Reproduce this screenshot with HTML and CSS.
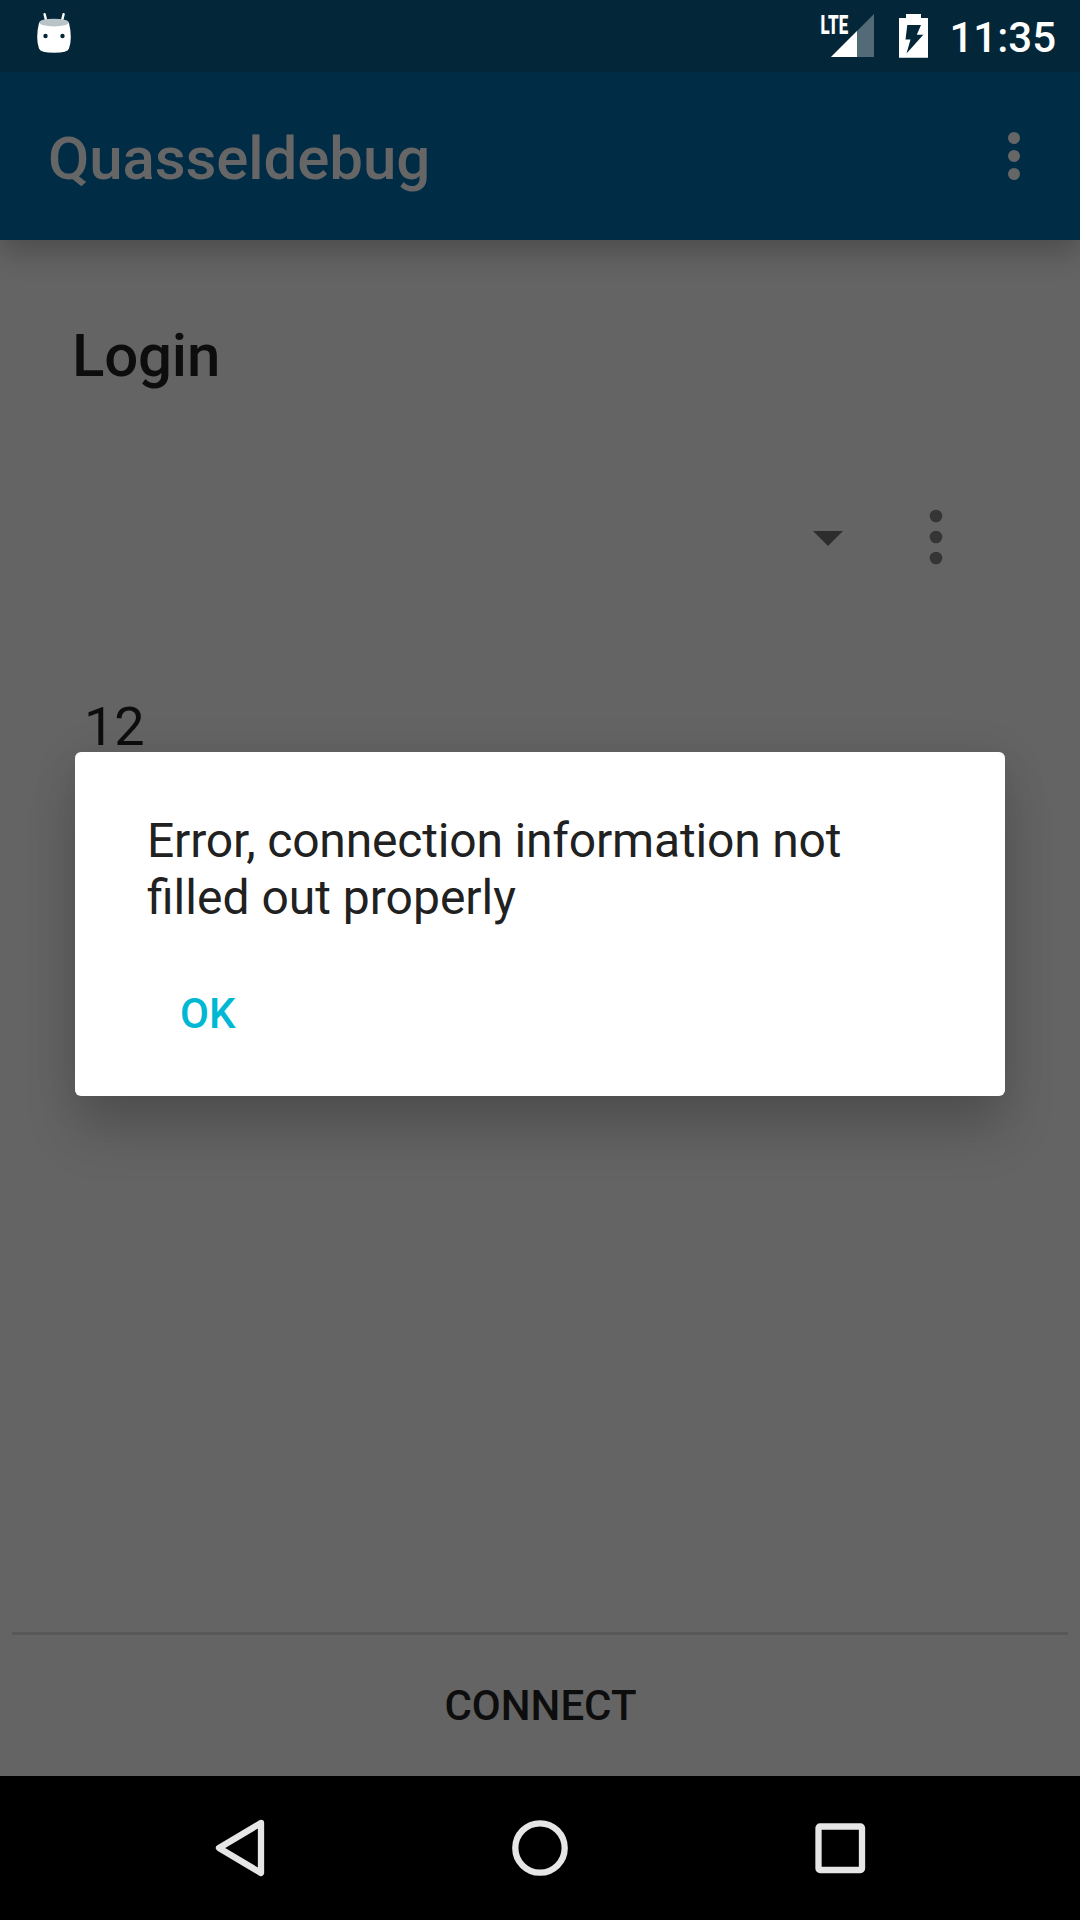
FILE: index.html
```html
<!DOCTYPE html>
<html lang="en">
<head>
<meta charset="utf-8">
<title>Quasseldebug</title>
<link rel="stylesheet" href="styles.css">
</head>
<body>
<div class="screen">
  <header class="status-bar">
    <svg class="status-head" width="36" height="42" viewBox="0 0 36 42">
      <path class="antenna" d="M8.6 2.2l1.8 7.4M27.6 2.2l-1.8 7.4"/>
      <path class="fill-white" d="M3 11Q1.2 18 1.2 25Q1.2 32 3 36.5Q4.300 40.800 18 40.800Q31.700 40.800 33 36.500Q34.800 32 34.800 25Q34.800 18 33 11Q30 8 18 8Q6 8 3 11z"/>
      <ellipse class="head-top" cx="18" cy="10.600" rx="14.800" ry="3.900"/>
      <circle class="fill-bar" cx="9.500" cy="24" r="2.200"/>
      <circle class="fill-bar" cx="26.500" cy="24" r="2.200"/>
    </svg>
    <div class="status-right">
      <svg class="signal" width="54" height="50" viewBox="0 -6 54 50">
        <path class="signal-off" d="M54 0V43H11z"/>
        <path class="fill-white" d="M37 17V43H11z"/>
        <text class="lte" x="0.600" y="19.700" textLength="27.500" lengthAdjust="spacingAndGlyphs">LTE</text>
      </svg>
      <svg class="battery" width="29" height="44" viewBox="0 0 29 44">
        <path class="fill-white" d="M7 0H22V4H29V43.700H0V4H7z"/>
        <path class="fill-bar" d="M8.300 11H22L17.800 20.800H24.300L7.500 39.500L11.500 25.500H6.500z"/>
      </svg>
      <span class="clock">11:35</span>
    </div>
  </header>
  <div class="app-bar">
    <h1 class="app-title">Quasseldebug</h1>
    <svg class="more-light" width="12" height="48" viewBox="0 0 12 48">
      <circle cx="6" cy="6" r="6"/><circle cx="6" cy="24" r="6"/><circle cx="6" cy="42" r="6"/>
    </svg>
  </div>
  <main class="content">
    <h2 class="login-title">Login</h2>
    <div class="account-row">
      <svg class="arrow" width="30" height="15" viewBox="0 0 30 15"><path d="M0 0H30L15 15z"/></svg>
      <svg class="more-dark" width="14" height="56" viewBox="0 0 14 56">
        <circle cx="7" cy="7" r="6.300"/><circle cx="7" cy="28" r="6.300"/><circle cx="7" cy="49" r="6.300"/>
      </svg>
    </div>
    <div class="field">12</div>
    <div class="connect">CONNECT</div>
  </main>
  <nav class="nav-bar">
    <div class="nav-item"><svg width="60" height="60" viewBox="0 0 60 60"><path d="M51 5L9 30L51 55z"/></svg></div>
    <div class="nav-item"><svg width="60" height="60" viewBox="0 0 60 60"><circle cx="30" cy="30" r="24.700"/></svg></div>
    <div class="nav-item"><svg width="60" height="60" viewBox="0 0 60 60"><rect x="8.500" y="8.500" width="43.500" height="43.500" rx="1.500"/></svg></div>
  </nav>
  <div class="dialog">
    <p class="message"><span class="tight">Error, connection information not</span> filled out properly</p>
    <div class="ok">OK</div>
  </div>
</div>
</body>
</html>
```
FILE: styles.css
```css
* { box-sizing: border-box; margin: 0; padding: 0; }
body { font-family: Roboto, sans-serif; background: #000; }
svg { display: block; flex: none; }
.screen {
  position: relative;
  display: flex;
  flex-direction: column;
  width: 1080px;
  height: 1920px;
  overflow: hidden;
  background: #646464;
}
.status-bar {
  position: relative;
  z-index: 1;
  display: flex;
  justify-content: space-between;
  height: 72px;
  padding: 12px 24px 0 36px;
  background: #032738;
}
.status-right { display: flex; align-items: flex-start; padding-top: 2px; }
.signal { margin: -6px 25px 0 0; }
.battery { margin-right: 21px; }
.clock { font-size: 42px; font-weight: 500; line-height: 48px; color: #fff; }
.fill-white { fill: #fff; }
.fill-bar { fill: #032738; }
.head-top { fill: #b9c4c9; }
.antenna { stroke: #fff; stroke-width: 2.4; stroke-linecap: round; }
.signal-off { fill: #536a77; }
.lte { fill: #fff; font-size: 26px; font-weight: 900; }
.app-bar {
  position: relative;
  display: flex;
  align-items: center;
  justify-content: space-between;
  height: 168px;
  padding: 0 60px 0 48px;
  background: #002c46;
  box-shadow: 0 12px 28px rgba(0, 0, 0, .24);
}
.app-title {
  padding-top: 5px;
  font-size: 60px;
  font-weight: 500;
  line-height: 70px;
  letter-spacing: -.1px;
  color: #666;
}
.more-light { fill: #666; }
.content { display: flex; flex: 1; flex-direction: column; color: #0d0d0d; }
.login-title {
  margin: 81px 0 0 72px;
  font-size: 60px;
  font-weight: 500;
  line-height: 70px;
  letter-spacing: -.2px;
}
.account-row {
  display: flex;
  align-items: center;
  justify-content: flex-end;
  gap: 86px;
  height: 56px;
  margin: 118px 137px 0 0;
}
.arrow { fill: #2d2d2d; margin-top: 3px; }
.more-dark { fill: #353535; }
.field { margin: 130px 84px 0; font-size: 54px; line-height: 64px; }
.connect {
  margin: auto 12px 0;
  height: 144px;
  padding-left: 1px;
  border-top: 3px solid #585858;
  font-size: 42px;
  font-weight: 500;
  line-height: 141px;
  text-align: center;
}
.nav-bar { display: flex; justify-content: center; height: 144px; background: #000; }
.nav-item { display: flex; align-items: center; justify-content: center; width: 300px; }
.nav-item svg { fill: none; stroke: #e6e6e6; stroke-width: 6.3; stroke-linejoin: round; }
.dialog {
  position: absolute;
  top: 752px;
  left: 75px;
  width: 930px;
  height: 344px;
  padding: 60px 72px 0;
  border-radius: 6px;
  background: #fff;
  box-shadow: 0 38px 52px -2px rgba(0, 0, 0, .17), 0 4px 44px rgba(0, 0, 0, .1);
}
.message { font-size: 48px; line-height: 57px; color: #212121; }
.tight { letter-spacing: -.18px; }
.ok { margin: 63px 0 0 33px; font-size: 42px; font-weight: 500; line-height: 50px; color: #00b8d4; }
```
